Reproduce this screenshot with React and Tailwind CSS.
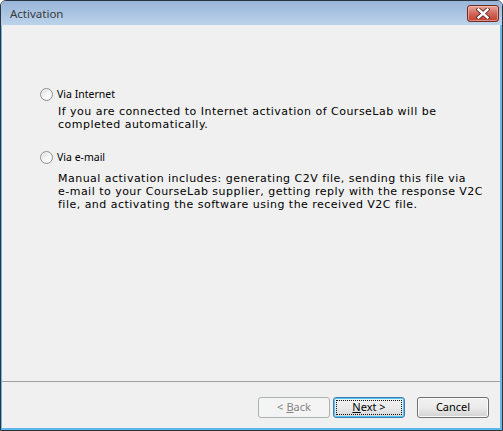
import React from "react";

const font = { fontFamily: '"Noto Sans", "Segoe UI", sans-serif' };
const descFont = { fontFamily: '"DejaVu Sans", Tahoma, sans-serif' };

function Radio() {
  return (
    <span className="inline-block w-[13px] h-[13px] rounded-full border border-[#8e8f8f] bg-gradient-to-br from-[#d4d4d4] via-[#f6f6f6] to-[#ffffff] shadow-[inset_0_0_0_1px_#f4f4f4] shrink-0" />
  );
}

function CloseButton() {
  return (
    <div className="w-[32px] h-[17px] rounded-[3px] border border-[#6f2b22] bg-gradient-to-b from-[#e9a99b] via-[#d0675a] to-[#c23f2c] shadow-[inset_0_0_0_1px_rgba(255,200,190,0.55)] flex items-center justify-center">
      <svg width="14" height="11" viewBox="0 0 14 11">
        <path d="M2.5 1.5 L11.5 9.5 M11.5 1.5 L2.5 9.5" stroke="#5b2a24" strokeWidth="4.2" strokeLinecap="square" />
        <path d="M2.5 1.5 L11.5 9.5 M11.5 1.5 L2.5 9.5" stroke="#ffffff" strokeWidth="2.4" strokeLinecap="square" />
      </svg>
    </div>
  );
}

function Btn({ children, variant }) {
  if (variant === "disabled") {
    return (
      <div className="w-[72px] h-[21px] rounded-[3px] border border-[#adb2b5] bg-[#f4f4f4] flex items-center justify-center text-[11px] text-[#838383]">
        {children}
      </div>
    );
  }
  if (variant === "default") {
    return (
      <div className="w-[72px] h-[21px] rounded-[3px] border border-[#3c7fb1] bg-gradient-to-b from-[#f2f2f2] via-[#ebebeb] to-[#d6d6d6] shadow-[inset_0_0_0_1px_#52c4f4] p-[2px] flex">
        <div className="flex-1 border border-dotted border-[#111] flex items-center justify-center text-[11px] text-black">
          {children}
        </div>
      </div>
    );
  }
  return (
    <div className="w-[72px] h-[21px] rounded-[3px] border border-[#707070] bg-gradient-to-b from-[#f2f2f2] via-[#ebebeb] to-[#d2d2d2] shadow-[inset_0_0_0_1px_#fbfbfb] flex items-center justify-center text-[11px] text-black">
      {children}
    </div>
  );
}

export default function App() {
  return (
    <div style={font} className="w-[503px] h-[431px] flex flex-col border border-[#2c3440] rounded-t-[6px] overflow-hidden bg-[#f0f0f0]">
      <div className="h-[24px] shrink-0 bg-gradient-to-b from-[#98b5d8] to-[#bcd3eb] flex items-start justify-between pl-[9px] pr-[3px]">
        <span className="mt-[5px] text-[11.5px] leading-[16px] text-[#3a3a3a]">Activation</span>
        <div className="mt-[4px]">
          <CloseButton />
        </div>
      </div>
      <div className="flex-1 flex flex-col border-l border-r-2 border-b-2 border-l-[#6eb6e4] border-r-[#6eb6e4] border-b-[#5cb8ea] bg-[#f0f0f0]">
        <div className="flex-1 pl-[38px] pt-[63px] text-[11px] leading-[13px] text-black">
          <div className="flex items-center h-[13px] text-[10.5px]">
            <Radio />
            <span className="ml-[4px]">Via Internet</span>
          </div>
          <div style={descFont} className="ml-[18px] mt-[4px] text-[11px] leading-[13px] tracking-[0.48px] whitespace-nowrap">
            If you are connected to Internet activation of CourseLab will be
            <br />
            completed automatically.
          </div>
          <div className="flex items-center h-[13px] mt-[20px] text-[10.5px]">
            <Radio />
            <span className="ml-[4px]">Via e-mail</span>
          </div>
          <div style={descFont} className="ml-[18px] mt-[8px] text-[11px] leading-[13px] tracking-[0.48px] whitespace-nowrap">
            Manual activation includes: generating C2V file, sending this file via
            <br />
            e-mail to your CourseLab supplier, getting reply with the response V2C
            <br />
            file, and activating the software using the received V2C file.
          </div>
        </div>
        <div className="h-px bg-[#a0a0a0]" />
        <div className="flex justify-end pr-[11px] pt-[15px] pb-[10px]">
          <Btn variant="disabled">
            &lt; <span className="underline ml-[3px]">B</span>ack
          </Btn>
          <div className="ml-[3px]">
            <Btn variant="default">
              <span className="underline">N</span>ext &gt;
            </Btn>
          </div>
          <div className="ml-[12px]">
            <Btn>Cancel</Btn>
          </div>
        </div>
      </div>
    </div>
  );
}
